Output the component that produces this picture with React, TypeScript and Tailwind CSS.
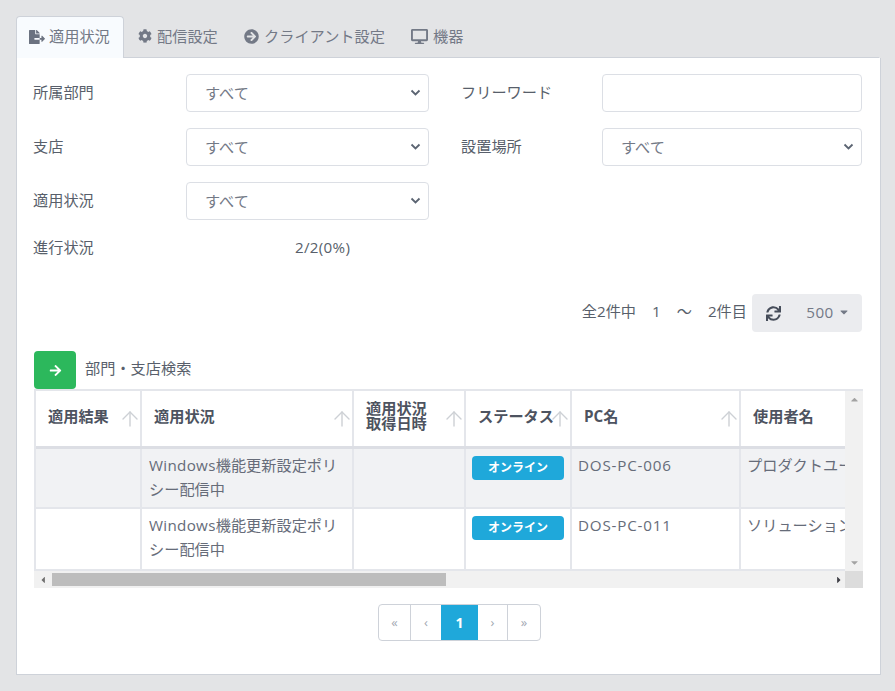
import { ArrowUp } from "lucide-react";
import {
  FaArrowCircleRight,
  FaArrowRight,
  FaCaretDown,
  FaCaretLeft,
  FaCaretRight,
  FaCaretUp,
  FaCog,
  FaDesktop,
  FaFileExport,
  FaSync,
} from "react-icons/fa";

const font = "font-['Open_Sans','Noto_Sans_CJK_JP',sans-serif]";

function SelectBox({ className }: { className: string }) {
  return (
    <div
      className={`flex h-[38px] items-center justify-between rounded border border-[#dcdfe5] bg-white pl-[18px] pr-[7px] text-[15.2px] text-[#737986] ${className}`}
    >
      <span>すべて</span>
      <svg width="11" height="8" viewBox="0 0 11 8" fill="none" stroke="#5b6472" strokeWidth="1.8">
        <path d="M1.5 1.5 5.5 5.5 9.5 1.5" />
      </svg>
    </div>
  );
}

function Label({ text, className = "w-[153px]" }: { text: string; className?: string }) {
  return <div className={`-mt-[2px] text-[15.2px] text-[#585f6b] ${className}`}>{text}</div>;
}

function Tab({ icon, text, className, active }: { icon: React.ReactNode; text: string; className: string; active?: boolean }) {
  return (
    <div
      className={`flex h-[42px] items-center rounded-t pb-[2px] text-[15.2px] text-[#737986] ${className} ${
        active ? "gap-[4px] border border-b-0 border-[#ced2d9] bg-[#f8fbfe]" : "gap-[5px]"
      }`}
    >
      {icon}
      <span>{text}</span>
    </div>
  );
}

function Th({ label, width, arrow = true, className = "" }: { label: React.ReactNode; width: string; arrow?: boolean; className?: string }) {
  return (
    <th className={`relative h-[56px] border-r-2 border-[#e4e6eb] pb-[4px] pl-[12px] text-left align-middle text-[15.2px] font-bold leading-[15px] text-[#4d5360] ${width} ${className}`}>
      {label}
      {arrow && <ArrowUp className="absolute -right-[2px] top-[16px] text-[#cdd0d5]" size={24} strokeWidth={1.4} />}
    </th>
  );
}

function Row({ pc, user, shaded, height }: { pc: string; user: string; shaded?: boolean; height: string }) {
  const td = "border-r-2 border-[#e4e6eb] align-top";
  return (
    <tr className={`border-b-2 border-[#e4e6eb] ${shaded ? "bg-[#f1f2f4]" : "bg-white"}`}>
      <td className={td} />
      <td className={`${td} ${height} px-[7px] pt-[4px] text-[15.2px] leading-[24px] text-[#666c79]`}>
        <span className="tracking-[0.3px]">Windows</span>機能更新設定ポリシー配信中
      </td>
      <td className={td} />
      <td className={`${td} px-[6px] pt-[7px]`}>
        <div className="flex h-[24px] w-[92px] items-center justify-center rounded bg-[#1fa8da] text-[12px] font-bold text-white">
          オンライン
        </div>
      </td>
      <td className={`${td} px-[6px] pt-[4px] text-[15.2px] leading-[24px] tracking-[0.8px] text-[#666c79]`}>{pc}</td>
      <td className="overflow-hidden whitespace-nowrap px-[6px] pt-[4px] align-top text-[15.2px] leading-[24px] text-[#666c79]">
        {user}
      </td>
    </tr>
  );
}

function PageBtn({ text, className }: { text: string; className: string }) {
  return (
    <div className={`flex h-full items-center justify-center text-[13px] text-[#a3a9b3] ${className}`}>
      {text}
    </div>
  );
}

export default function App() {
  return (
    <div className={`h-[691px] w-[895px] overflow-hidden bg-[#e3e4e6] p-4 ${font}`}>
      <div className="flex h-[42px] items-start border-b border-[#ced2d9]">
        <Tab active className="w-[108px] pl-[12px]" text="適用状況" icon={<FaFileExport size={16} className="text-[#6b7280]" />} />
        <Tab className="w-[106px] pl-[14px]" text="配信設定" icon={<FaCog size={14} />} />
        <Tab className="w-[167px] pl-[14px]" text="クライアント設定" icon={<FaArrowCircleRight size={15} />} />
        <Tab className="w-[80px] pl-[14px]" text="機器" icon={<FaDesktop size={17} />} />
      </div>

      <div className="h-[617px] w-[865px] border border-t-0 border-[#ced2d9] bg-white pl-[16px] pr-[18px] pt-[16px]">
        <div className="flex items-center">
          <Label text="所属部門" />
          <SelectBox className="w-[243px]" />
          <Label text="フリーワード" className="ml-[32px] w-[141px]" />
          <div className="h-[38px] w-[260px] rounded border border-[#dcdfe5] bg-white" />
        </div>
        <div className="mt-[16px] flex items-center">
          <Label text="支店" />
          <SelectBox className="w-[243px]" />
          <Label text="設置場所" className="ml-[32px] w-[141px]" />
          <SelectBox className="w-[260px]" />
        </div>
        <div className="mt-[16px] flex items-center">
          <Label text="適用状況" />
          <SelectBox className="w-[243px]" />
        </div>
        <div className="mt-[17px] flex h-[20px] items-center text-[15.2px] text-[#585f6b]">
          <div className="w-[262px]">進行状況</div>
          <div className="tracking-[0.3px]">2/2(0%)</div>
        </div>

        <div className="ml-px mt-[37px] flex h-[38px] items-center justify-end">
          <div className="-mt-[3px] mr-[5px] flex gap-[16px] text-[15.2px] text-[#585f6b]">
            <span>全2件中</span>
            <span>1</span>
            <span>〜</span>
            <span>2件目</span>
          </div>
          <div className="flex h-[38px] w-[42px] items-center justify-center rounded-l bg-[#ebecef] text-[#464d5a]">
            <FaSync size={15} />
          </div>
          <div className="flex h-[38px] w-[68px] items-center justify-center gap-[4px] rounded-r bg-[#ebecef] pb-[2px] text-[15.2px] tracking-[0.5px] text-[#737986]">
            500
            <FaCaretDown size={12} />
          </div>
        </div>

        <div className="ml-px mt-[19px] flex items-center">
          <div className="flex h-[38px] w-[42px] items-center justify-center rounded bg-[#2cb85c] text-white">
            <FaArrowRight size={13} />
          </div>
          <span className="-mt-[4px] ml-[9px] text-[15.2px] text-[#585f6b]">部門・支店検索</span>
        </div>

        <div className="ml-px w-[829px] bg-[#f1f1f1]">
          <div className="flex h-[182px] border-t-2 border-[#e4e6eb]">
            <div className="w-[811px] overflow-hidden border-l-2 border-[#e4e6eb]">
              <table className="w-[859px] table-fixed border-collapse">
                <thead>
                  <tr className="border-b-[3px] border-[#dcdee4] bg-white">
                    <Th label="適用結果" width="w-[105px]" />
                    <Th label="適用状況" width="w-[212px]" />
                    <Th label={<>適用状況<br />取得日時</>} width="w-[112px]" />
                    <Th label="ステータス" width="w-[106px]" />
                    <Th label="PC名" width="w-[169px]" />
                    <Th label="使用者名" width="w-[155px]" arrow={false} className="border-r-0" />
                  </tr>
                </thead>
                <tbody>
                  <Row shaded height="h-[61px]" pc="DOS-PC-006" user="プロダクトユーザー" />
                  <Row height="h-[62px]" pc="DOS-PC-011" user="ソリューションユーザー" />
                </tbody>
              </table>
            </div>
            <div className="flex w-[18px] flex-col items-center justify-between py-[3px] text-[#a3a3a3]">
              <FaCaretUp size={11} />
              <FaCaretDown size={11} />
            </div>
          </div>
          <div className="flex h-[17px] items-center">
            <div className="flex w-[18px] justify-center text-[#6f6f6f]">
              <FaCaretLeft size={10} />
            </div>
            <div className="h-[13px] w-[394px] bg-[#bdbdbd]" />
            <div className="flex w-[399px] justify-end pr-[1px] text-[#3f3f46]">
              <FaCaretRight size={10} />
            </div>
            <div className="ml-auto h-[17px] w-[18px] bg-[#dcdcdc]" />
          </div>
        </div>

        <div className="mt-[16px] flex justify-center pl-[24px]">
          <div className="flex h-[37px] overflow-hidden rounded border border-[#ced2d9] bg-white">
            <PageBtn text="«" className="w-[32px] border-r border-[#ced2d9]" />
            <PageBtn text="‹" className="w-[30px]" />
            <div className="flex h-full w-[37px] items-center justify-center bg-[#1fa8da] text-[14px] font-bold text-white">1</div>
            <PageBtn text="›" className="w-[30px] border-r border-[#ced2d9]" />
            <PageBtn text="»" className="w-[32px]" />
          </div>
        </div>
      </div>
    </div>
  );
}
